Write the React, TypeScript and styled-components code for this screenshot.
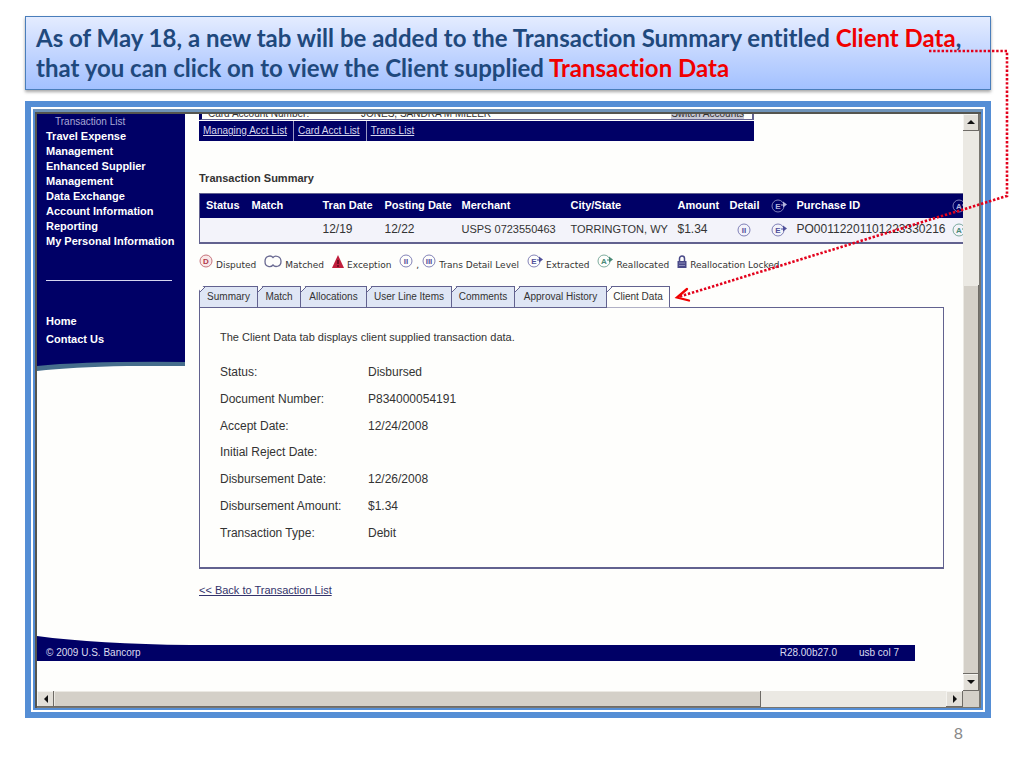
import React from 'react';
import styled, { createGlobalStyle, css } from 'styled-components';

const NAVY = '#000066';
const LINE = '#62628f';
const BLUE = '#558ed5';
const FACE = '#d4d0c8';

const Global = createGlobalStyle`
  *, *::before, *::after { box-sizing: border-box; }
  body {
    margin: 0;
    background: #fff;
    color: #333;
    font: 12px/15px "Liberation Sans", Arial, sans-serif;
  }
  h1, h2, p, dl, dd, ul { margin: 0; padding: 0; }
  ul { list-style: none; }
  button { font: inherit; color: inherit; padding: 0; border: 0; border-radius: 0; }
`;

const Slide = styled.main`
  position: relative;
  display: flex;
  flex-direction: column;
  min-height: 100vh;
  padding: 16px 33px 24px 25px;
`;

const Callout = styled.h1`
  padding: 6px 10px;
  border: 1px solid #4a7ebb;
  background: linear-gradient(#e4ecff, #bfd3ff 55%, #a3c1ff);
  box-shadow: 0 2px 3px rgba(0, 0, 0, 0.35);
  color: #1f497d;
  font: 700 24px/30px Lato, "Open Sans", sans-serif;
  font-variant-ligatures: none;
  white-space: nowrap;
`;

const Accent = styled.span`
  color: #f00000;
`;

const Frame = styled.section`
  margin-top: 11px;
  padding: 2px;
  border: 6px solid ${BLUE};
  background: #fff;
`;

const Window = styled.div`
  display: grid;
  grid-template-columns: minmax(0, 1fr) 18px;
  border: 2px solid ${BLUE};
  border-top: 3px solid #6f93b8;
  box-shadow: inset 2px 2px 0 #55554f;
  padding: 2px 0 0 2px;
`;

const Viewport = styled.div`
  display: flex;
  flex-direction: column;
  overflow: hidden;
  background: #fefefc;
`;

const Columns = styled.div`
  display: flex;
  align-items: flex-start;
`;

const Sidebar = styled.nav`
  flex: 0 0 148px;
  color: #fff;
  font-weight: 700;
`;

const SideBody = styled.div`
  height: 247px;
  padding-left: 9px;
  background: ${NAVY};
`;

const SideLink = styled.a<{ $sub?: boolean; $tall?: boolean }>`
  display: block;
  color: #fff;
  text-decoration: none;
  font-size: 11px;
  line-height: ${(p) => (p.$tall ? 18 : 15)}px;
  ${(p) =>
    p.$sub &&
    css`
      padding-left: 9px;
      color: #a9a9d6;
      font-size: 10px;
      font-weight: 400;
    `}
`;

const Divider = styled.hr`
  width: 126px;
  margin: 31px 0;
  border: 0;
  border-top: 1px solid #d5d5f0;
`;

const Wave = styled.svg`
  display: block;
  width: 100%;
`;

const Content = styled.div`
  flex: 1;
  min-width: 0;
  padding-left: 14px;
`;

const AccountBar = styled.div`
  width: 555px;
`;

const AccountRow = styled.div`
  display: flex;
  align-items: flex-end;
  height: 6px;
  padding: 0 8px 0 6px;
  overflow: hidden;
  border: solid ${LINE};
  border-width: 0 2px 1px 3px;
  border-left-color: ${NAVY};
  font-size: 10px;
  line-height: 11px;

  > :first-child { width: 153px; }
  > :last-child { margin-left: auto; background: #c8c8d4; }
`;

const AccountLinks = styled.nav`
  display: flex;
  height: 20px;
  margin-top: 1px;
  background: ${NAVY};
  font-size: 10px;
  line-height: 19px;
`;

const AccountLink = styled.a`
  padding: 0 6px 0 4px;
  color: #d8d8ee;

  & + & { border-left: 1px solid #9a9ac4; }
`;

const SectionTitle = styled.h2`
  margin: 30px 0 7px;
  font-size: 11px;
  line-height: 15px;
`;

const TableClip = styled.div`
  overflow: hidden;
`;

const Table = styled.table`
  width: 790px;
  table-layout: fixed;
  border-collapse: collapse;
  border: 1px solid ${LINE};
  border-bottom-width: 2px;
  white-space: nowrap;

  th, td { padding: 0 0 0 6px; text-align: left; vertical-align: middle; }
  th { height: 24px; background: ${NAVY}; color: #fff; font-size: 11px; }
  td { height: 25px; background: #f3f3fa; }
  svg { display: block; }
`;

const Cell = styled.td<{ $small?: boolean; $center?: boolean }>`
  font-size: ${(p) => (p.$small ? 11 : 12)}px;

  svg { margin-left: ${(p) => (p.$center ? 7 : 0)}px; }
`;

const Legend = styled.ul`
  display: flex;
  align-items: flex-end;
  height: 22px;
  margin-top: 5px;
  font: 9px/12px "DejaVu Sans", sans-serif;
  white-space: nowrap;
`;

const LegendItem = styled.li`
  display: flex;
  align-items: flex-end;
  gap: 3px;
  margin-right: 8px;

  svg { margin-bottom: 3px; }
`;

const Tabs = styled.div`
  display: flex;
  position: relative;
  z-index: 1;
  height: 22px;
  margin: 15px 0 -1px;
`;

const TabButton = styled.button<{ $w: number; $active?: boolean }>`
  width: ${(p) => p.$w}px;
  height: 22px;
  background: linear-gradient(135deg, transparent 3px, ${LINE} 3px, ${LINE} 4px,
    ${(p) => (p.$active ? '#fefefc' : '#dfe6f5')} 4px);
  border: solid ${LINE};
  border-width: 1px 1px 1px 0;
  border-bottom-color: ${(p) => (p.$active ? '#fefefc' : LINE)};
  clip-path: polygon(0 5px, 5px 0, 100% 0, 100% 100%, 0 100%);
  font-size: 10px;
  line-height: 20px;
  white-space: nowrap;

  &:first-child { border-left-width: 1px; }
`;

const Panel = styled.section`
  height: 262px;
  margin-right: 19px;
  padding: 22px 20px;
  border: 1px solid ${LINE};
  border-bottom-width: 2px;
`;

const Intro = styled.p`
  font-size: 11px;
`;

const Details = styled.dl`
  display: grid;
  grid-template-columns: 148px 1fr;
  grid-auto-rows: 1fr;
  align-items: center;
  height: 187px;
  margin-top: 15px;
`;

const BackLink = styled.a`
  display: inline-block;
  margin-top: 14px;
  color: #33336b;
  font-size: 11px;
`;

const FooterBar = styled.footer`
  display: flex;
  width: 878px;
  height: 16px;
  margin-bottom: 30px;
  padding: 0 16px 0 9px;
  background: ${NAVY};
  color: #dcdcf0;
  font-size: 10px;
  line-height: 16px;

  > :first-child { margin-right: auto; }
  > :last-child { margin-left: 22px; }
`;

const FooterWave = styled.svg`
  display: block;
  width: 153px;
  height: 9px;
  margin-top: 38px;
`;

const Bar = styled.div<{ $vertical?: boolean }>`
  display: flex;
  flex-direction: ${(p) => (p.$vertical ? 'column' : 'row')};
  background: #ebe9e3;
  ${(p) => (p.$vertical ? 'border-right: 2px solid #77756f;' : 'height: 17px; border-bottom: 1px solid #77756f;')}
`;

const Arrow = styled.button`
  display: grid;
  place-items: center;
  flex: 0 0 17px;
  background: #e2dfd8;
  box-shadow: inset -1px -1px 0 #6e6b66, inset 1px 1px 0 #f4f3ef;
`;

const Thumb = styled.div<{ $grow: number }>`
  flex: ${(p) => p.$grow} 1 0;
  background: ${FACE};
  box-shadow: inset -1px -1px 0 #6e6b66, inset 1px 1px 0 #ebe9e3;
`;

const Track = styled.div<{ $grow: number }>`
  flex: ${(p) => p.$grow} 1 0;
`;

const Corner = styled.div`
  background: ${FACE};
  border-right: 2px solid #77756f;
  border-bottom: 1px solid #77756f;
`;

const PageNumber = styled.footer`
  margin: 5px 28px 0 0;
  color: #898989;
  font: 16px/20px Lato, sans-serif;
  text-align: right;
`;

const Pointer = styled.svg`
  position: absolute;
  top: 46px;
  right: 12px;
  pointer-events: none;
`;

function Badge({ letter, color, arrow, fill = 'none' }: { letter: string; color: string; arrow?: boolean; fill?: string }) {
  return (
    <svg width={arrow ? 16 : 14} height="14" viewBox={arrow ? '0 0 16 14' : '0 0 14 14'} aria-hidden="true">
      <circle cx="7" cy="7" r="6" fill={fill} stroke={color} strokeWidth="1" opacity="0.7" />
      <text x="7" y="10" fontSize="8" fontWeight="700" fontFamily="Liberation Sans" textAnchor="middle" fill={color}>
        {letter}
      </text>
      {arrow && <path d="M10 5.500H12V2.500L16 5.500L12 8.500V6.500H10Z" fill={color} />}
    </svg>
  );
}

const Matched = () => (
  <svg width="18" height="13" viewBox="0 0 18 13" aria-hidden="true">
    <path d="M9 2.500C7 0 1 0.500 1 6.500S7 12.500 9 10C11 12.500 17 12 17 6.500S11 0 9 2.500Z" fill="none" stroke="#6a6a92" strokeWidth="1.300" />
  </svg>
);

const Warning = () => (
  <svg width="12" height="13" viewBox="0 0 12 13" aria-hidden="true">
    <path d="M6 0L12 13H0Z" fill="#c01f3c" />
    <path d="M6 5V9M6 10V12" stroke="#5c0a1c" strokeWidth="1.500" />
  </svg>
);

const Lock = () => (
  <svg width="10" height="13" viewBox="0 0 10 13" aria-hidden="true">
    <path d="M2.500 6V3.500A2.500 2.500 0 0 1 7.500 3.500V6" fill="none" stroke="#4a4a88" strokeWidth="1.500" />
    <rect x="0.500" y="6" width="9" height="7" fill="#4a4a88" />
    <path d="M2 8H8M2 10.500H8" stroke="#8c8cba" strokeWidth="1" />
  </svg>
);

const arrows = {
  Up: 'M0 5L4 1L8 5Z',
  Down: 'M0 2L4 6L8 2Z',
  Left: 'M6 0L2 4L6 8Z',
  Right: 'M2 0L6 4L2 8Z',
};

const ScrollArrow = ({ dir }: { dir: keyof typeof arrows }) => (
  <Arrow aria-label={`Scroll ${dir.toLowerCase()}`}>
    <svg width="8" height="8" viewBox="0 0 8 8">
      <path d={arrows[dir]} fill="#111" />
    </svg>
  </Arrow>
);

const sideLinks = [
  'Travel Expense Management',
  'Enhanced Supplier Management',
  'Data Exchange',
  'Account Information',
  'Reporting',
  'My Personal Information',
];

const columns = [46, 71, 62, 77, 109, 107, 52, 41, 26, 155, 44];

const tabs: [string, number][] = [
  ['Summary', 59],
  ['Match', 43],
  ['Allocations', 66],
  ['User Line Items', 85],
  ['Comments', 63],
  ['Approval History', 92],
  ['Client Data', 63],
];

const details = [
  ['Status:', 'Disbursed'],
  ['Document Number:', 'P834000054191'],
  ['Accept Date:', '12/24/2008'],
  ['Initial Reject Date:', ''],
  ['Disbursement Date:', '12/26/2008'],
  ['Disbursement Amount:', '$1.34'],
  ['Transaction Type:', 'Debit'],
];

const INDIGO = '#50509a';
const GREEN = '#4a8a76';

export default function App() {
  return (
    <Slide>
      <Global />
      <Callout>
        As of May 18, a new tab will be added to the Transaction Summary entitled <Accent>Client Data</Accent>,
        <br />
        that you can click on to view the Client supplied <Accent>Transaction Data</Accent>
      </Callout>

      <Frame>
        <Window>
          <Viewport>
            <Columns>
              <Sidebar>
                <SideBody>
                  <SideLink href="#" $sub>Transaction List</SideLink>
                  {sideLinks.map((label) => (
                    <SideLink href="#" key={label}>{label}</SideLink>
                  ))}
                  <Divider />
                  <SideLink href="#" $tall>Home</SideLink>
                  <SideLink href="#" $tall>Contact Us</SideLink>
                </SideBody>
                <Wave height="11" viewBox="0 0 148 11" preserveAspectRatio="none" aria-hidden="true">
                  <path d="M0 0H148V5H90Q35 6 0 10Z" fill="#456d8c" />
                  <path d="M0 0H148V1Q50 0 0 5Z" fill={NAVY} />
                </Wave>
              </Sidebar>

              <Content>
                <AccountBar>
                  <AccountRow>
                    <span>Card Account Number:</span>
                    <span>JONES, SANDRA M MILLER</span>
                    <span>Switch Accounts</span>
                  </AccountRow>
                  <AccountLinks>
                    <AccountLink href="#">Managing Acct List</AccountLink>
                    <AccountLink href="#">Card Acct List</AccountLink>
                    <AccountLink href="#">Trans List</AccountLink>
                  </AccountLinks>
                </AccountBar>

                <SectionTitle>Transaction Summary</SectionTitle>
                <TableClip>
                  <Table>
                    <colgroup>
                      {columns.map((w, i) => (
                        <col key={i} width={w} />
                      ))}
                    </colgroup>
                    <thead>
                      <tr>
                        <th>Status</th>
                        <th>Match</th>
                        <th>Tran Date</th>
                        <th>Posting Date</th>
                        <th>Merchant</th>
                        <th>City/State</th>
                        <th>Amount</th>
                        <th>Detail</th>
                        <th><Badge letter="E" color="#b4b4dc" arrow /></th>
                        <th>Purchase ID</th>
                        <th><Badge letter="A" color="#b4b4dc" arrow /></th>
                      </tr>
                    </thead>
                    <tbody>
                      <tr>
                        <Cell />
                        <Cell />
                        <Cell>12/19</Cell>
                        <Cell>12/22</Cell>
                        <Cell $small>USPS 0723550463</Cell>
                        <Cell $small>TORRINGTON, WY</Cell>
                        <Cell>$1.34</Cell>
                        <Cell $center><Badge letter="II" color={INDIGO} /></Cell>
                        <Cell><Badge letter="E" color={INDIGO} arrow /></Cell>
                        <Cell>PO00112201101223330216</Cell>
                        <Cell><Badge letter="A" color={GREEN} arrow /></Cell>
                      </tr>
                    </tbody>
                  </Table>
                </TableClip>

                <Legend>
                  <LegendItem><Badge letter="D" color="#b03a48" fill="#f7dfe0" />Disputed</LegendItem>
                  <LegendItem><Matched />Matched</LegendItem>
                  <LegendItem><Warning />Exception</LegendItem>
                  <LegendItem>
                    <Badge letter="II" color={INDIGO} />,
                    <Badge letter="III" color={INDIGO} />Trans Detail Level
                  </LegendItem>
                  <LegendItem><Badge letter="E" color={INDIGO} arrow />Extracted</LegendItem>
                  <LegendItem><Badge letter="A" color={GREEN} arrow />Reallocated</LegendItem>
                  <LegendItem><Lock />Reallocation Locked</LegendItem>
                </Legend>

                <Tabs role="tablist">
                  {tabs.map(([label, w]) => (
                    <TabButton key={label} role="tab" aria-selected={label === 'Client Data'} $w={w} $active={label === 'Client Data'}>
                      {label}
                    </TabButton>
                  ))}
                </Tabs>
                <Panel>
                  <Intro>The Client Data tab displays client supplied transaction data.</Intro>
                  <Details>
                    {details.map(([term, value]) => (
                      <React.Fragment key={term}>
                        <dt>{term}</dt>
                        <dd>{value}</dd>
                      </React.Fragment>
                    ))}
                  </Details>
                </Panel>
                <BackLink href="#">&lt;&lt; Back to Transaction List</BackLink>
              </Content>
            </Columns>

            <FooterWave viewBox="0 0 153 9" preserveAspectRatio="none" aria-hidden="true">
              <path d="M0 0Q60 8 153 9H0Z" fill={NAVY} />
            </FooterWave>
            <FooterBar>
              <span>© 2009 U.S. Bancorp</span>
              <span>R28.00b27.0</span>
              <span>usb col 7</span>
            </FooterBar>
          </Viewport>
          <Bar $vertical>
            <ScrollArrow dir="Up" />
            <Track $grow={154} />
            <Thumb $grow={387} />
            <ScrollArrow dir="Down" />
          </Bar>
          <Bar>
            <ScrollArrow dir="Left" />
            <Thumb $grow={709} />
            <Track $grow={185} />
            <ScrollArrow dir="Right" />
          </Bar>
          <Corner />
        </Window>
      </Frame>
      <PageNumber>8</PageNumber>

      <Pointer width="340" height="260" viewBox="672 46 340 260" aria-hidden="true">
        <path d="M929 51H1007V196L680 296.500" fill="none" stroke="#e3001b" strokeWidth="2.600" strokeDasharray="2.400 1.800" />
        <path d="M687 289L677 297.500L689 300.500" fill="none" stroke="#f00000" strokeWidth="2.300" strokeLinecap="round" />
      </Pointer>
    </Slide>
  );
}
